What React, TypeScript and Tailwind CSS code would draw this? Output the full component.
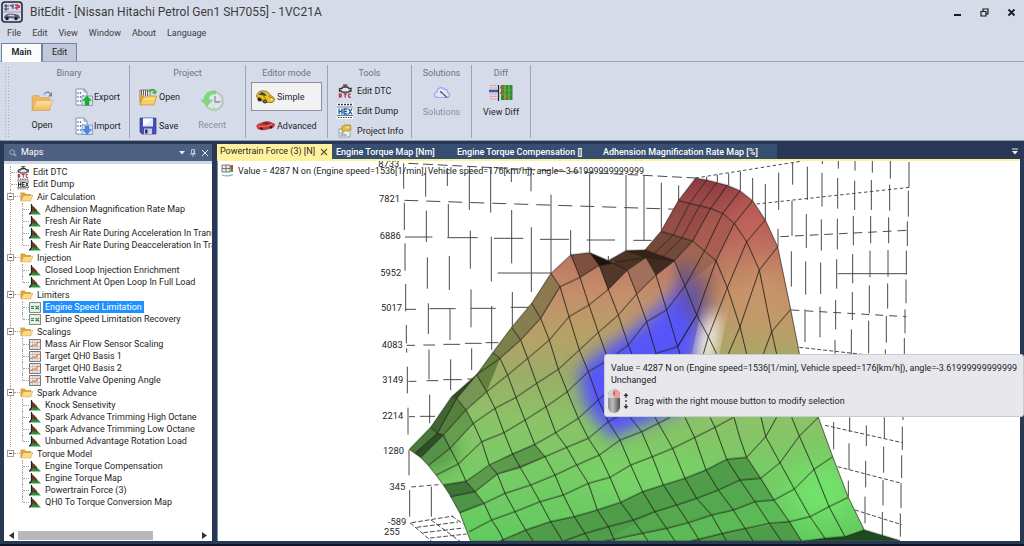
import React from "react";

type IconProps = { className?: string };

/* ---------- icons ---------- */

const AppIcon = () => (
  <svg viewBox="0 0 22 22" className="size-[22px] shrink-0">
    <rect x="1" y="1" width="20" height="20" rx="3" fill="#d9d8ea" stroke="#222838" strokeWidth="1.6" />
    <path d="M3 5h5M3 8h5M5 3v7M9 4l3 2M12 3v5" stroke="#3d4566" strokeWidth="1.2" fill="none" />
    <path d="M14 4l5 1M14 7l5-1M16 3v6" stroke="#c03a55" strokeWidth="1.3" fill="none" />
    <path d="M2 11h18" stroke="#9aa0c0" strokeWidth="1" />
    <path d="M3 17c0-3 3-4 6-4.500l5 .5c3 .5 5 1.500 5 4.500z" fill="#59607c" />
    <path d="M6 15l3-1.500 4 .5 1 1.500z" fill="#c8d0e6" />
    <circle cx="6" cy="17.500" r="1.800" fill="#1e2230" />
    <circle cx="15" cy="17.500" r="1.800" fill="#1e2230" />
  </svg>
);

const FolderIcon = () => (
  <svg viewBox="0 0 24 24" className="size-6">
    <defs>
      <linearGradient id="folderFront" x1="0" y1="0" x2="0" y2="1">
        <stop offset="0" stopColor="#fde3a4" />
        <stop offset="1" stopColor="#efb95c" />
      </linearGradient>
    </defs>
    <path d="M2 21V7.500l1-1h5.500l2 2H19l1 1V21z" fill="#e9b765" stroke="#cf9a4c" strokeWidth=".5" />
    <path d="M2 21.500l4.500-10h16.500l-4 10z" fill="url(#folderFront)" stroke="#d29b48" strokeWidth=".5" />
    <path d="M14 5.500c2-3 5-3 6.500-.5" fill="none" stroke="#6d83ad" strokeWidth="1.200" />
    <path d="M22 3v4.500h-4z" fill="#6d83ad" />
  </svg>
);

const SmallFolder = () => (
  <svg viewBox="0 0 13 11" className="h-[11px] w-[13px] shrink-0">
    <path d="M.5 10V1.500h4L6 3h5v7z" fill="#d9a441" />
    <path d="M1 10L3.500 4.500h9.500L10.500 10z" fill="#fbd98a" stroke="#b98a35" strokeWidth=".4" />
  </svg>
);

const TransferIcon = ({ up }: { up: boolean }) => (
  <svg viewBox="0 0 18 18" className="size-[18px] shrink-0">
    <path d="M1 1h8l3 3v13H1z" fill="#f8fafd" stroke="#6f8fb5" strokeWidth=".9" />
    <path d="M9 1v3h3" fill="none" stroke="#6f8fb5" strokeWidth=".9" />
    <path d="M3 4v2M5.500 4v2M3 8v2M5.500 8v2M8 7v2M3 12v2M5.500 12v2" stroke="#70809a" strokeWidth="1.200" />
    <path d="M7 8h10.500v9.500H7z" fill="#d5e2f2" stroke="#6f8fb5" strokeWidth=".8" />
    {up ? (
      <path d="M12 8l4.500 4.500h-2.500V17h-4v-4.500H7.500z" fill="#12b81e" stroke="#0d8d18" strokeWidth=".4" />
    ) : (
      <path d="M12 17.500l4.500-5h-2.500V9h-4v3.500H7.500z" fill="#4d87ea" stroke="#2c5fbe" strokeWidth=".4" />
    )}
  </svg>
);

const ProjectOpenIcon = () => (
  <svg viewBox="0 0 18 18" className="size-[18px] shrink-0">
    <path d="M1 2h10v13H1z" fill="#f2f0ee" stroke="#6a5a52" strokeWidth=".7" />
    <path d="M2.500 2v6M4.500 2v6M6.500 2v6M8.500 2v6" stroke="#5a4a44" strokeWidth=".9" />
    <path d="M10 4c1.500-3 5-3 6-.5" fill="none" stroke="#3fae3e" strokeWidth="2" />
    <path d="M18 2.500l-1.500 4-4-2z" fill="#3fae3e" />
    <path d="M1 17V7h4l1 2v8z" fill="#dba63a" />
    <path d="M1 17l3-8h4l1-1h8.500l-2.500 9z" fill="#f8cf62" stroke="#b6842a" strokeWidth=".6" />
    <path d="M5 11h10.500" stroke="#fff0b8" strokeWidth="1" />
  </svg>
);

const SaveIcon = () => (
  <svg viewBox="0 0 18 18" className="size-[18px] shrink-0">
    <path d="M1 1h16v16H3l-2-2z" fill="#4450b4" stroke="#303a8c" strokeWidth=".7" />
    <rect x="4" y="1.500" width="10" height="8" fill="#dfe6f8" />
    <path d="M4 1.500h10L4 9.500z" fill="#f8faff" />
    <rect x="5" y="11.500" width="8" height="5.500" fill="#c9cdea" />
    <rect x="6" y="12.500" width="2.500" height="4" fill="#262f7c" />
  </svg>
);

const RecentIcon = () => (
  <svg viewBox="0 0 24 22" className="h-[22px] w-6">
    <circle cx="14" cy="11" r="9" fill="#dfe5e8" stroke="#b3bdbf" strokeWidth="1.500" />
    <path d="M15 6v6h5" fill="none" stroke="#84939b" strokeWidth="1.300" />
    <path d="M14 3.500v1M14 17.500v1M21.500 11h-1" stroke="#7c8a92" />
    <path d="M16 1C9 0 4 4 4 10H1l6 6 5.500-6H8.500C8.500 6 11 3.500 16 3.500z" fill="#7ddb79" stroke="#6cc56b" strokeWidth=".5" />
    <path d="M8 17c2 3 6 4 9 3" fill="none" stroke="#a5dba3" strokeWidth="1.500" />
  </svg>
);

const YellowCar = () => (
  <svg viewBox="0 0 19 14" className="h-[14px] w-[19px] shrink-0">
    <path d="M.5 6.500C1 3 3 .8 6.500.8c4 0 6 1.200 7.500 4l4 3c1 2 0 4-2 4.700L9 12.500 3 10z" fill="#eebf22" stroke="#4b3f10" strokeWidth=".6" />
    <path d="M2.500 4.500l3-2.500 3.500 1.500 1.500 2.500-3.500-.5z" fill="#39465a" />
    <path d="M1.500 7.500l5.500 2.500M7.500 6l2.500 3.500M12.500 6l4 2.500" stroke="#7b641a" strokeWidth=".8" />
    <circle cx="3.500" cy="9.500" r="2" fill="#2a2a2a" />
    <circle cx="9" cy="11.500" r="2" fill="#2a2a2a" />
    <circle cx="9" cy="11.500" r=".8" fill="#bbb" />
    <circle cx="15.500" cy="9.500" r="1" fill="#fdf3b4" />
  </svg>
);

const RedCar = () => (
  <svg viewBox="0 0 19 10" className="h-[10px] w-[19px] shrink-0">
    <path d="M.5 5c1-2 3-2.500 5-3C8 .5 13 0 15 1.500l3.500 1.500c.5 2-1 4-4 4.500L8 9 2 8z" fill="#cf3338" stroke="#8a1c20" strokeWidth=".4" />
    <path d="M6 2.500l4-1.200 4 .7-3 1.500z" fill="#5a2a32" />
    <path d="M2 5l6 .7 8-2" stroke="#f08a8a" strokeWidth=".8" fill="none" />
    <circle cx="5.500" cy="7.800" r="1.300" fill="#2c1c1c" />
    <circle cx="15" cy="6.300" r="1.300" fill="#2c1c1c" />
  </svg>
);

const DtcIcon = ({ className = "size-[14px]" }: IconProps) => (
  <svg viewBox="0 0 14 14" className={`${className} shrink-0`}>
    <path d="M2.500 4.500H4L5 3h4.500L11 4.500h2V7h-1.500l-1 1.200H4L3 7H1.500V5z" fill="#e4e6ee" stroke="#2c2c2c" strokeWidth="1.300" />
    <path d="M5 1h4.500M7.200 1v1.500" stroke="#2c2c2c" strokeWidth="1.200" />
    <path d="M1.500 9.800v3.400c2.500 0 2.500-3.400 0-3.400zM5.500 9.800h3.500M7.200 9.800v3.700M12.800 10c-3-1-3 4 0 3.300" fill="none" stroke="#a8333e" strokeWidth="1.300" />
  </svg>
);

const HexIcon = ({ color, className = "size-[16px]" }: IconProps & { color: string }) => (
  <svg viewBox="0 0 16 16" className={`${className} shrink-0`}>
    <rect width="16" height="16" fill="#fff" />
    <path d="M1 1.500h14" stroke="#333" strokeWidth="1.300" strokeDasharray="2 1" />
    <path d="M0 4h16M0 12.500h16" stroke={color} strokeWidth=".8" />
    <path d="M2 5.500v6M5 5.500v6M2 8.500h3M7 6h3.500M7 8.500h3M7 11h3.500M7 5.500v6M11.500 5.500l3.500 6M15 5.500l-3.500 6" stroke={color} strokeWidth="1.300" fill="none" />
    <path d="M1 14.500h14" stroke="#444" strokeWidth="1.200" strokeDasharray="1.500 1" />
  </svg>
);

const ProjectInfoIcon = () => (
  <svg viewBox="0 0 14 14" className="size-[14px] shrink-0">
    <path d="M1 5h11v8H1z" fill="#eef0f3" stroke="#8a9097" strokeWidth=".8" />
    <path d="M2.500 9h3M2.500 11h6" stroke="#5a7ba8" />
    <path d="M4 7V2.500L7 1l5.500 0 .5 4.500-3.500 2-2-1.500-1.500 2z" fill="#e6c23c" stroke="#8d6f22" strokeWidth=".6" />
    <path d="M8 4l3-1" stroke="#fff2b0" />
  </svg>
);

const CloudIcon = () => (
  <svg viewBox="0 0 18 14" className="h-[14px] w-[18px]">
    <path d="M4.500 11.500C.5 11 .5 6.500 4 6c0-4 5-6 7.500-2.500 2-.5 3.500 1 3 2.800 3 .7 2.500 5-.5 5.200z" fill="#e3e6fb" stroke="#a0a3f0" strokeWidth="1.200" />
    <path d="M8 6l6 5.500" stroke="#5d5d65" strokeWidth="1.300" />
    <path d="M7 5l2 .5-1.500 1.500z" fill="#4d4d55" />
  </svg>
);

const DiffIcon = () => (
  <svg viewBox="0 0 24 18" className="h-[18px] w-6">
    <path d="M1 1.500h7M1 4h7M1 10h7M1 12.500h7M1 15h7" stroke="#e79aa2" strokeWidth="1.200" strokeDasharray="3 .6" />
    <path d="M0 7h9" stroke="#3460a0" strokeWidth="2.500" />
    <path d="M9.500 1v16" stroke="#222" strokeWidth="1.200" />
    <rect x="12" y="1" width="11.500" height="15" fill="#2f8a35" />
    <path d="M11 3.500h4M11 9h4M15 13h4" stroke="#c8552f" strokeWidth="2" />
    <path d="M16 1v15M20 1v15" stroke="#8acb52" strokeWidth=".9" />
    <path d="M12 6h11M12 11h11" stroke="#74ae44" strokeWidth=".7" />
  </svg>
);

const SurfaceIcon = () => (
  <svg viewBox="0 0 12 11" className="h-[11px] w-3 shrink-0">
    <path d="M0 10.500L2.500 7V1l9.500 9.500z" fill="#2f8f3c" />
    <path d="M2.800 1v7l1.500-1 1 1.500L6.500 7l1.500 1V6z" fill="#7a3a28" />
    <path d="M2.500 0v7.500L.3 10.300" stroke="#1c241c" strokeWidth="1.200" fill="none" />
    <path d="M5 3.200v4M7.500 5.800v3" stroke="#2c3c28" strokeWidth=".6" fill="none" />
  </svg>
);

const ScalarIcon = () => (
  <svg viewBox="0 0 12 11" className="h-[11px] w-3 shrink-0">
    <rect x=".6" y=".6" width="10.800" height="9.800" fill="#eef3ee" stroke="#6c7a70" strokeWidth=".9" />
    <path d="M2 4.700h3M2 6.500h3M6.500 3.800l3.500 3.600M10 3.800L6.500 7.400" stroke="#28894a" strokeWidth="1.200" />
  </svg>
);

const CurveIcon = () => (
  <svg viewBox="0 0 12 11" className="h-[11px] w-3 shrink-0">
    <rect x=".6" y=".6" width="10.800" height="9.800" fill="#f6ede6" stroke="#60646c" strokeWidth=".9" />
    <path d="M3.500 1v9M6 1v9M8.500 1v9M1 3.500h10M1 7.500h10" stroke="#a3a3a3" strokeWidth=".5" />
    <path d="M1.500 8l2.500-2 3 .5L8 4l3-1" fill="none" stroke="#d98958" strokeWidth="1.200" />
  </svg>
);

const MouseIcon = () => (
  <svg viewBox="0 0 22 26" className="h-[26px] w-[22px] shrink-0">
    <defs>
      <linearGradient id="mouseBody" x1="0" x2="1">
        <stop offset="0" stopColor="#8b8b8b" />
        <stop offset=".4" stopColor="#bdbdbd" />
        <stop offset="1" stopColor="#4c4c4c" />
      </linearGradient>
    </defs>
    <rect x="1" y="1" width="12" height="24" rx="6" fill="url(#mouseBody)" />
    <path d="M7 1a6 6 0 0 0-6 6v3h6z" fill="#d3d3d3" />
    <path d="M7 1a6 6 0 0 1 6 6v3H7z" fill="#f59a9a" />
    <rect x="6" y="3" width="2" height="4.500" rx="1" fill="#b86a6a" />
    <path d="M19 5l2.500 3h-5zM19 21l2.500-3h-5z" fill="#333" />
    <path d="M19 7v3M19 12v2M19 16v3" stroke="#333" strokeWidth="1.300" />
  </svg>
);

/* ---------- ribbon ---------- */

const Group = ({ title, className = "", children }: { title: string; className?: string; children: React.ReactNode }) => (
  <section className={`flex flex-col border-r border-[#9aa5bd] ${className}`}>
    <h2 className="pt-[2px] text-center text-[9px] leading-3 text-[#6d7482]">{title}</h2>
    {children}
  </section>
);

const RowButton = ({ icon, label, className = "gap-1" }: { icon: React.ReactNode; label: string; className?: string }) => (
  <button className={`flex items-center text-[9px] leading-3 whitespace-nowrap ${className}`}>
    {icon}
    {label}
  </button>
);

const LargeButton = ({ icon, label, className = "" }: { icon: React.ReactNode; label: string; className?: string }) => (
  <button className={`flex flex-col items-center text-[9px] leading-3 ${className}`}>
    <span className="flex h-7 items-center">{icon}</span>
    <span className="pt-1">{label}</span>
  </button>
);

const Ribbon = () => (
  <div className="flex h-[79px] border-b border-[#8c98b2] pt-[3px] pb-[2px] pl-[4px]">
    <div className="my-px w-[5px] bg-[radial-gradient(#a3adc2_1px,transparent_1px)] bg-[length:3px_3px]" />
    <Group title="Binary" className="w-[121px]">
      <div className="flex items-start pt-2">
        <LargeButton icon={<FolderIcon />} label="Open" className="w-[66px]" />
        <div className="flex flex-col gap-[11px] pt-px">
          <RowButton icon={<TransferIcon up />} label="Export" className="gap-[1px]" />
          <RowButton icon={<TransferIcon up={false} />} label="Import" className="gap-[1px]" />
        </div>
      </div>
    </Group>
    <Group title="Project" className="w-[116px]">
      <div className="flex items-start gap-2 pt-2 pl-[9px]">
        <div className="flex flex-col gap-[11px] pt-px">
          <RowButton icon={<ProjectOpenIcon />} label="Open" className="gap-[2px]" />
          <RowButton icon={<SaveIcon />} label="Save" className="gap-[2px]" />
        </div>
        <LargeButton icon={<RecentIcon />} label="Recent" className="w-12 text-[#8b919d]" />
      </div>
    </Group>
    <Group title="Editor mode" className="w-[82px]">
      <div className="flex flex-col gap-[5px] px-[5px] pt-[3px]">
        <RowButton icon={<YellowCar />} label="Simple" className="h-[29px] gap-[2px] border border-[#8b919c] bg-[#f2f2f2] pl-1" />
        <RowButton icon={<RedCar />} label="Advanced" className="h-5 gap-[2px] pl-[5px]" />
      </div>
    </Group>
    <Group title="Tools" className="w-[84px]">
      <div className="flex flex-col gap-[5px] pt-[5px] pl-[9px]">
        <RowButton icon={<span className="flex w-4 justify-center"><DtcIcon /></span>} label="Edit DTC" />
        <RowButton icon={<HexIcon color="#255c94" />} label="Edit Dump" />
        <RowButton icon={<span className="flex w-4 justify-center"><ProjectInfoIcon /></span>} label="Project Info" />
      </div>
    </Group>
    <Group title="Solutions" className="w-[60px]">
      <button className="flex flex-col items-center gap-[6px] pt-[7px] text-[9px] leading-3 text-[#8b919d]">
        <CloudIcon />
        Solutions
      </button>
    </Group>
    <Group title="Diff" className="w-[59px]">
      <button className="flex flex-col items-center gap-[4px] pt-[5px] text-[9px] leading-3">
        <DiffIcon />
        View Diff
      </button>
    </Group>
  </div>
);

/* ---------- maps tree ---------- */

type Kind = "surface" | "scalar" | "curve";
const tree: { name: string; kind: Kind; items: string[] }[] = [
  {
    name: "Air Calculation",
    kind: "surface",
    items: [
      "Adhension Magnification Rate Map",
      "Fresh Air Rate",
      "Fresh Air Rate During Acceleration In Transient",
      "Fresh Air Rate During Deacceleration In Transient",
    ],
  },
  { name: "Injection", kind: "surface", items: ["Closed Loop Injection Enrichment", "Enrichment At Open Loop In Full Load"] },
  { name: "Limiters", kind: "scalar", items: ["Engine Speed Limitation", "Engine Speed Limitation Recovery"] },
  {
    name: "Scalings",
    kind: "curve",
    items: ["Mass Air Flow Sensor Scaling", "Target QH0 Basis 1", "Target QH0 Basis 2", "Throttle Valve Opening Angle"],
  },
  {
    name: "Spark Advance",
    kind: "surface",
    items: ["Knock Sensetivity", "Spark Advance Trimming High Octane", "Spark Advance Trimming Low Octane", "Unburned Advantage Rotation Load"],
  },
  {
    name: "Torque Model",
    kind: "surface",
    items: ["Engine Torque Compensation", "Engine Torque Map", "Powertrain Force (3)", "QH0 To Torque Conversion Map"],
  },
];
const SELECTED = "Engine Speed Limitation";
const kindIcon: Record<Kind, React.ReactNode> = { surface: <SurfaceIcon />, scalar: <ScalarIcon />, curve: <CurveIcon /> };

const Branch = () => <span className="w-[6px] shrink-0 border-t border-dotted border-[#a0a0a0]" />;

const MapsPanel = () => (
  <aside className="flex w-[208px] shrink-0 flex-col bg-white">
    <header className="flex h-[17px] items-center bg-[#4d6082] pr-[3px] pl-[5px] text-[9px] text-white">
      <svg viewBox="0 0 10 10" className="size-[8px]">
        <circle cx="4" cy="4" r="3" fill="none" stroke="#b5c0d6" />
        <path d="M6 6l3 3" stroke="#b5c0d6" strokeWidth="1.300" />
      </svg>
      <h2 className="flex-1 pl-[4px]">Maps</h2>
      <div className="flex items-center gap-[5px]">
        <button aria-label="Panel menu">
          <svg viewBox="0 0 6 4" className="block h-1 w-[6px]"><path d="M0 0h6L3 3.500z" fill="#e3e8f1" /></svg>
        </button>
        <button aria-label="Pin">
          <svg viewBox="0 0 6 8" className="block h-2 w-[6px]"><path d="M1.500 .5h3v4h-3zM0 5h6M3 5v3M4 1v4" fill="none" stroke="#d3dae8" strokeWidth=".8" /></svg>
        </button>
        <button aria-label="Close panel">
          <svg viewBox="0 0 8 8" className="block size-2"><path d="M1 1l6 6M7 1L1 7" stroke="#e3e8f1" strokeWidth="1" /></svg>
        </button>
      </div>
    </header>
    <div className="h-[3px] bg-[#cfd6e5]" />
    <div className="flex-1 overflow-hidden pt-[2px] text-[9px] leading-3 whitespace-nowrap text-[#1e1e1e]">
      <div className="ml-[6px] border-l border-dotted border-[#a0a0a0]">
        <div className="flex h-3 items-center"><Branch /><DtcIcon className="size-3" /><span className="pl-1">Edit DTC</span></div>
        <div className="flex h-3 items-center"><Branch /><HexIcon color="#222" className="size-3" /><span className="pl-1">Edit Dump</span></div>
      </div>
      <ul>
        {tree.map((group, index) => (
          <li key={group.name} className="relative">
            {index < tree.length - 1 && <span className="absolute inset-y-0 left-[6px] border-l border-dotted border-[#a0a0a0]" />}
            <div className="flex h-[13px] items-center pl-[3px]">
              <button aria-label={`Collapse ${group.name}`} className="relative flex size-[7px] items-center justify-center border border-[#9c9c9c] bg-white">
                <span className="h-px w-[3px] bg-[#444]" />
              </button>
              <Branch />
              <SmallFolder />
              <span className="pl-[4px]">{group.name}</span>
            </div>
            <ul className="ml-[18px]">
              {group.items.map((item, row) => (
                <li key={item} className="flex h-3">
                  <span className={`w-0 border-l border-dotted border-[#a0a0a0] ${row === group.items.length - 1 ? "h-[6px]" : "h-3"}`} />
                  <span className="flex items-center">
                    <Branch />
                    {kindIcon[group.kind]}
                    <span className={`ml-[2px] px-[2px] ${item === SELECTED ? "bg-[#1e90ff] text-white" : ""}`}>{item}</span>
                  </span>
                </li>
              ))}
            </ul>
          </li>
        ))}
      </ul>
    </div>
    <div className="flex h-[11px] items-center justify-between px-[5px]">
      <svg viewBox="0 0 5 7" className="h-[7px] w-[5px]"><path d="M5 0v7L0 3.500z" fill="#333" /></svg>
      <div className="mx-1 flex-1"><div className="h-[9px] w-3/4 bg-[#b8b8b8]" /></div>
      <svg viewBox="0 0 5 7" className="h-[7px] w-[5px]"><path d="M0 0v7l5-3.500z" fill="#333" /></svg>
    </div>
  </aside>
);

/* ---------- surface chart ---------- */

const axis: [string, number, number][] = [
  ["8733", 553, 80],
  ["7821", 555, 186],
  ["6886", 557, 296],
  ["5952", 559, 407],
  ["5017", 561, 514],
  ["4083", 563, 624],
  ["3149", 565, 730],
  ["2214", 565, 838],
  ["1280", 567, 942],
  ["345", 571, 1049],
  ["-589", 574, 1154],
  ["255", 554, 1184],
];

const OUTLINE =
  "583,928 647,862 710,770 785,704 833,638 890,562 950,490 1008,400 1067,345 1124,338 1180,362 1233,332 1290,330 1338,274 1390,182 1442,114 1475,120 1537,136 1575,152 1613,182 1651,240 1688,320 1727,508 1753,640 1810,832 1853,950 1900,1072 1948,1170 2055,1202 767,1204 735,1120 705,1065 685,1035 663,1005 640,976 617,952";

const SurfaceChart = () => (
  <svg viewBox="9 63 2406 1140" className="block w-full" role="img" aria-label="Powertrain force surface">
    <defs>
      <linearGradient id="height" gradientUnits="userSpaceOnUse" x1="1200" y1="114" x2="1200" y2="1204">
        <stop offset="0" stopColor="#8c3a40" />
        <stop offset=".1" stopColor="#a75350" />
        <stop offset=".2" stopColor="#bb7360" />
        <stop offset=".32" stopColor="#c48f6a" />
        <stop offset=".44" stopColor="#b5a268" />
        <stop offset=".54" stopColor="#9bad66" />
        <stop offset=".66" stopColor="#8cc268" />
        <stop offset=".8" stopColor="#79cb66" />
        <stop offset="1" stopColor="#60cb5e" />
      </linearGradient>
      <clipPath id="surface"><polygon points={OUTLINE} /></clipPath>
      <filter id="soft" x="-30%" y="-30%" width="160%" height="160%"><feGaussianBlur stdDeviation="24" /></filter>
      <filter id="softer" x="-80%" y="-80%" width="260%" height="260%"><feGaussianBlur stdDeviation="45" /></filter>
    </defs>

    {/* back walls */}
    <g fill="none" stroke="#4a4a4a" strokeWidth="3">
      <path d="M566 70V146M568 188V270M570 310V392M572 432V514M574 555V610M575 625V638M577 680V760M579 803V884M582 930V1006M584 1050V1130" />
      <path d="M632 82V170M634 212V306M637 352V446M640 490V582M642 628V718M644 764V850M649 1040V1130" />
      <path d="M697 84V138M700 192V292M703 348V450M705 505V600M707 658V750" />
      <path d="M763 80V210M766 272V386M768 448V562M770 625V690M827 88V218M829 290V424M830 498V630M889 84V126M890 210V370M892 456V560M948 84V154M949 262V456M1008 164V400M1067 270V345M1124 100V338M1180 348V362" />
      <path d="M1233 105V332M1287 108V300M1339 128V270M1391 136V180M1443 112V124M1475 110V120M1507 104V128M1541 100V136M1576 94V152M1613 114V182M1651 132V240M1689 266V320" />
      <path d="M1691 98V210M1733 68V134M1731 182V288M1729 334V440M1777 80V180M1774 222V324M1772 364V464M1770 508V606M1822 63V72M1821 98V200M1819 238V332M1817 368V462M1815 500V592M1870 63V86M1868 114V206M1867 236V328M1865 358V446M1862 480V568M1860 600V660M1920 63V92M1919 122V210M1915 228V316M1913 342V430M1912 456V540M1909 568V660" />
      <path d="M1972 63V98M1969 120V210M1967 228V310M1965 332V412M1963 436V520M1961 542V640M2026 63V116M2024 134V212M2021 232V310M2019 330V410M2018 430V506M2014 528V608M2011 628V660M2082 66V142M2080 152V230M2077 244V318M2074 332V404M2073 418V490M2070 508V580M2068 594V660" />
      <path d="M1856 846V928M1904 832V876M1902 910V990M1900 1022V1070M1954 856V918M1952 962V1042M1950 1070V1150M2008 832V896M2006 920V998M2004 1020V1096M2002 1116V1188M2064 830V840M2062 860V930M2060 946V1014M2058 1030V1104M2056 1120V1190" />
      <path d="M580 70L1442 114" strokeDasharray="30 14" />
      <path d="M568 181L1390 208" strokeDasharray="42 24" />
      <path d="M570 291H652M697 293H788M837 295H925M975 298H1062M1115 300H1200M1255 301H1310" />
      <path d="M848 399H1008M572 508H603M643 506H722M767 505H842M887 502H942M575 616H600M625 615H660M685 613H735M750 610H800M812 608H850M580 724H604M635 722H670M685 719H740M757 717H785M582 830H600M615 829H660" />
      <path d="M589 1041L670 1034" strokeDasharray="14 9" />
      <path d="M1442 114L1763 63M1625 192L2084 142" strokeDasharray="10 8" />
      <path d="M1696 290L2077 271" strokeDasharray="26 18" />
      <path d="M1868 401H2074" />
      <path d="M1729 510L2074 530" strokeDasharray="24 18" />
      <path d="M1753 622L1950 644M1830 856L2062 908M1868 980L2060 1030M1920 1110L2060 1154" strokeDasharray="12 6" />
      <path d="M585 1148L650 1204M648 1140L735 1204M710 1128L745 1152M590 1148L715 1128M605 1162L730 1146M625 1178L745 1164M645 1194L755 1182" strokeDasharray="14 6" />
    </g>

    {/* shaded surface */}
    <polygon points={OUTLINE} fill="url(#height)" />
    <g clipPath="url(#surface)">
      <ellipse cx="1615" cy="240" rx="55" ry="100" fill="#d96f63" opacity=".6" filter="url(#softer)" />
      <ellipse cx="1640" cy="470" rx="70" ry="110" fill="#c99a6c" opacity=".7" filter="url(#softer)" />
      <ellipse cx="1820" cy="1060" rx="110" ry="90" fill="#72ee6e" opacity=".7" filter="url(#softer)" />
      <ellipse cx="1290" cy="1010" rx="200" ry="60" fill="#7ddb6b" opacity=".6" filter="url(#softer)" />
      <ellipse cx="640" cy="930" rx="90" ry="70" fill="#4d8e42" opacity=".7" filter="url(#soft)" />
      <polygon points="1338,274 1433,303 1378,362 1290,330" fill="#74493a" />
      <polygon points="1433,303 1503,362 1410,438 1378,362" fill="#9a6148" opacity=".7" />
      <polygon points="1338,274 1390,182 1487,205 1433,303" fill="#8b4740" opacity=".7" />
      <polygon points="1433,303 1487,205 1558,250 1503,362" fill="#a4594c" opacity=".7" />
      <polygon points="1410,438 1503,362 1480,590 1445,525" fill="#8b5c58" opacity=".7" filter="url(#soft)" />
      <g filter="url(#soft)" fill="#5754f8">
        <polygon points="1398,425 1425,450 1462,535 1452,610 1430,700 1400,810 1250,865 1190,895 1110,800 1090,690 1150,640 1265,560 1345,490" />
        <polygon points="1390,350 1440,390 1480,500 1450,580 1385,480" fill="#5c4f9c" opacity=".75" />
      </g>
      <ellipse cx="1480" cy="600" rx="24" ry="90" fill="#fff" filter="url(#soft)" transform="rotate(12 1480 600)" />
      {/* steep facets */}
      <g>
        <polygon points="1067,345 1124,338 1153,377 1095,412" fill="#80503f" />
        <polygon points="1124,338 1153,377 1237,390 1180,362" fill="#1e130e" />
        <polygon points="1153,377 1215,365 1237,390 1180,448" fill="#523829" />
        <polygon points="1180,362 1233,332 1293,352 1237,390 1205,368" fill="#4e3425" />
        <polygon points="1233,332 1290,330 1378,362 1293,352" fill="#35231a" />
        <polygon points="1293,352 1378,362 1323,405" fill="#412a20" />
        <polygon points="1237,390 1293,352 1323,405 1265,462" fill="#a1705a" />
        <polygon points="1008,400 1035,440 977,535 950,490" fill="#8d7850" />
        <polygon points="950,490 977,535 917,600 890,562" fill="#857e4f" />
        <polygon points="890,562 917,600 855,655 833,638" fill="#7a8049" />
        <polygon points="833,638 855,655 815,755 785,704" fill="#66803f" />
        <polygon points="785,704 770,738 729,776 712,768" fill="#2f4a25" />
        <polygon points="710,770 725,775 667,880 647,862" fill="#426332" />
        <polygon points="725,775 753,810 685,885 667,880" fill="#55803e" />
        <polygon points="785,704 815,755 753,810 725,775" fill="#769653" />
        <polygon points="753,810 775,850 705,925 685,885" fill="#659c4e" />
        <polygon points="583,928 647,862 667,880 600,940" fill="#4b7b3c" />
        <polygon points="600,940 667,880 685,885 617,952" fill="#2e4f27" />
        <polygon points="617,952 685,885 705,925 640,976" fill="#559148" />
        <polygon points="685,1035 753,1024 780,1055 705,1072" fill="#3f7338" />
        <polygon points="705,1072 780,1055 807,1090 735,1120" fill="#4d9447" />
        <polygon points="753,1024 823,978 890,942 960,913 990,950 917,985 847,1002 780,1055" fill="#5c9a4c" />
        <polygon points="853,1204 932,1170 1007,1145 1078,1130 1147,1110 1217,1087 1283,1055 1345,1035 1410,1015 1473,990 1535,958 1595,952 1637,1015 1677,1080 1723,1145 1760,1204" fill="#4f9c49" />
        <polygon points="853,1204 1165,1204 1320,1115 1385,1095 1445,1075 1510,1050 1575,1020 1637,1015 1677,1080 1620,1085 1555,1110 1490,1125 1420,1148 1165,1202" fill="#54a84e" />
        <polygon points="1425,1202 1545,1175 1723,1145 1677,1080 1620,1085 1555,1110 1490,1125 1355,1165 1165,1202" fill="#5cba56" />
        <polygon points="1765,1204 1830,1195 1890,1190 1948,1170 2055,1202" fill="#1f4a20" />
      </g>
    </g>

    {/* mesh */}
    <g fill="none" stroke="#1c1c14" strokeWidth="2.500" strokeLinejoin="round">
      <polygon points={OUTLINE} strokeWidth="2" />
      <g transform="translate(435 600)">
        <path d="M212 262L232 280L250 285L270 325L295 372L318 424L345 455L372 490L395 540L418 575L432 604" />
        <path d="M275 170L290 175L318 210L340 250L365 305L388 375L412 402L435 460L465 515L497 570L520 604" />
        <path d="M350 104L380 155L405 205L432 278L458 342L482 385L512 435L540 485L572 545L600 590L608 604" />
        <path d="M398 38L420 55L443 105L468 172L495 240L525 315L555 350L585 405L610 465L643 530L675 580L690 604" />
        <path d="M455 -38L482 0L503 55L530 130L558 200L587 278L620 322L650 375L685 430L712 510L745 560L765 604" />
        <path d="M515 -110L542 -65L568 0L595 88L622 155L655 235L685 295L718 345L750 412L782 487L820 540L865 604" />
        <path d="M573 -200L600 -160L627 -70L658 30L685 95L715 180L745 245L780 300L812 375L848 455L885 515L920 565L945 604" />
        <path d="M165 340L232 280L290 175L350 104L420 55L482 0L542 -65L600 -160L660 -188L718 -225" />
        <path d="M182 352L250 285L318 210L380 155L443 105L503 55L568 0L627 -70L687 -105L745 -152L802 -210L858 -248" />
        <path d="M205 376L270 325L340 250L405 205L468 172L530 130L595 88L658 30L715 -23L775 -75L830 -138L888 -195L943 -238" />
        <path d="M228 405L295 372L365 305L432 278L495 240L558 200L622 155L685 95L745 60L805 15L860 -55L920 -90L975 -162" />
        <path d="M250 435L318 424L388 375L458 342L525 313L587 278L655 235L715 180L770 130L830 90L888 40L953 20L1010 -75" />
        <path d="M270 470L345 455L412 402L482 380L555 350L620 322L685 295L745 245L800 215" />
        <path d="M300 517L372 490L435 460L512 435L585 405L650 375L718 345L780 300L845 275L930 232" />
        <path d="M328 575L395 540L465 515L540 485L610 465L685 430L750 412L812 375L877 350L938 325L1005 292L1065 262L1120 232" />
        <path d="M418 604L497 570L572 545L643 530L712 510L782 487L848 455L910 435L975 415L1038 390L1100 358L1160 352L1217 290L1250 232" />
        <path d="M608 604L675 580L745 560L820 540L885 515L950 495L1010 475L1075 450L1140 420L1202 415L1260 368L1318 288L1375 232" />
      </g>
      <g transform="translate(975 90)">
        <path d="M92 252L120 322L147 405L175 487L205 570M150 248L178 287L205 358L235 435L265 525L295 600M205 272L262 300L290 372L320 455L348 550M258 242L318 262L348 315L380 420L413 530L435 600" />
        <path d="M315 240L403 272L435 348L470 435L505 500L530 552M363 184L458 213L528 272L562 353L600 470L620 552M415 92L512 115L548 130L583 160L620 215L658 300L695 485L710 552" />
        <path d="M500 30L450 98L400 195L345 248M530 38L480 105L425 205L370 258" strokeWidth="2" />
        <path d="M562 46L512 115L458 213L403 272M600 62L548 130L495 240L435 348M638 92L583 160L528 272L470 435L413 530M676 150L620 215L562 353L505 500L490 552M713 230L658 300L600 470L565 552M752 418L695 485L670 552M178 287L240 275L318 262L403 272" />
      </g>
      <g transform="translate(1155 570)">
        <path d="M90 262L125 305L157 380L190 465L230 525L265 578L300 634M165 262L218 355L255 445L290 505L335 555L380 634M255 262L285 325L318 420L355 480L400 540L460 634M330 262L345 292L380 388L420 450L465 515L508 580L545 634" />
        <path d="M402 262L420 325L440 382L482 445L522 510L568 575L605 634M483 262L497 320L540 398L583 477L630 560L675 625M575 262L598 318L642 418L687 530L735 620" />
        <path d="M10 634L200 595L265 578L335 555L400 540L465 515L522 510L583 477L642 418L698 380M270 634L390 605L508 580L568 575L630 560L687 530L745 502M610 634L675 625L735 620L793 600" />
      </g>
    </g>

    <g fontFamily="Roboto, 'Open Sans', sans-serif" fontSize="28" fill="#262626" textAnchor="end">
      {axis.map(([label, x, y]) => (
        <text key={label} x={x} y={y}>{label}</text>
      ))}
    </g>
  </svg>
);

const VALUE = "Value = 4287 N on (Engine speed=1536[1/min], Vehicle speed=176[km/h]), angle=-3.61999999999999";

const Workspace = () => (
  <main className="flex min-w-0 flex-1 flex-col">
    <div className="flex h-[15px] items-stretch text-[9px] leading-[17px] font-medium whitespace-nowrap text-white">
      <div className="flex w-[115px] items-center justify-between bg-[#fff29d] pr-1 pl-[3px] font-normal text-[#2b2b2b]">
        <button>Powertrain Force (3) [N]</button>
        <button aria-label="Close tab">
          <svg viewBox="0 0 8 8" className="block size-2"><path d="M1 1l6 6M7 1L1 7" stroke="#5d5836" strokeWidth="1.100" /></svg>
        </button>
      </div>
      <button className="w-[122px] bg-[#364e6f] pl-[4px] text-left">Engine Torque Map [Nm]</button>
      <button className="w-[146px] bg-[#364e6f] pl-[3px] text-left">Engine Torque Compensation []</button>
      <button className="w-[177px] bg-[#364e6f] pl-[3px] text-left">Adhension Magnification Rate Map [%]</button>
      <button aria-label="Open documents" className="ml-auto px-[2px]">
        <svg viewBox="0 0 6 7" className="h-[7px] w-[6px]"><path d="M0 .5h6v1H0zM0 3h6L3 6.500z" fill="#e8ecf4" /></svg>
      </button>
    </div>
    <div className="h-[2px] bg-[#fff29d]" />
    <div className="relative flex-1 border-l border-[#7e8fae] bg-white">
      <SurfaceChart />
      <div className="absolute top-[3px] left-[3px] flex items-center gap-1 text-[9px] leading-3 whitespace-nowrap text-[#222]">
        <svg viewBox="0 0 13 13" className="size-[13px]">
          <path d="M1 1h8v7H1zM5 1v7M1 4.500h8" fill="#e9e9e9" stroke="#6a6a6a" strokeWidth=".9" />
          <path d="M9.500 1h2.500v4H9.500z" fill="#c63d32" />
          <path d="M9.500 5h2.500v3H9.500z" fill="#3aa044" />
          <path d="M1 11c4 1.500 8 1 11-.5" fill="none" stroke="#6bbab6" strokeWidth="1.200" />
        </svg>
        {VALUE}
      </div>
      <div
        role="tooltip"
        className="absolute top-[193px] left-[386px] w-[420px] rounded-[3px] border border-[#c8cad4] bg-[#e8e8ec] pt-[7px] pb-[2px] pl-[6px] text-[9px] leading-3 whitespace-nowrap text-[#222]"
      >
        <p>{VALUE}</p>
        <p>Unchanged</p>
        <div className="-ml-[4px] flex items-center gap-[6px] pt-[2px]">
          <MouseIcon />
          Drag with the right mouse button to modify selection
        </div>
      </div>
    </div>
  </main>
);

export default function App() {
  return (
    <div className="flex min-h-screen flex-col overflow-x-hidden bg-[#d6dbe9] font-[Roboto,'Open_Sans',sans-serif] text-[#1e1e1e]">
      <header className="flex h-6 items-center gap-[7px] pr-2 pl-[1px]">
        <AppIcon />
        <h1 className="flex-1 text-[12px] text-[#3c3c3c]">BitEdit - [Nissan Hitachi Petrol Gen1 SH7055] - 1VC21A</h1>
        <div className="flex items-center gap-[18px] text-[#1b1b1b]">
          <button aria-label="Minimize"><svg viewBox="0 0 9 9" className="block size-[9px]"><path d="M1 7h7" stroke="currentColor" strokeWidth="2" /></svg></button>
          <button aria-label="Restore"><svg viewBox="0 0 9 9" className="block size-[9px]"><path d="M1 3.500h5v4.500H1zM3 3V1h5v5H6" fill="none" stroke="currentColor" strokeWidth="1.200" /></svg></button>
          <button aria-label="Close"><svg viewBox="0 0 9 9" className="block size-[9px]"><path d="M1.500 1.500l6 6M7.500 1.500l-6 6" stroke="currentColor" strokeWidth="1.800" /></svg></button>
        </div>
      </header>
      <nav className="flex h-[19px] items-center gap-[11px] pl-[7px] text-[9px] text-[#3c3c3c]">
        {["File", "Edit", "View", "Window", "About", "Language"].map((item) => (
          <button key={item}>{item}</button>
        ))}
      </nav>
      <div className="flex h-[19px] border-b border-[#9aa5bd] pl-[1px] text-[9px]">
        <button className="-mb-px w-[41px] border border-b-0 border-[#6d82ad] bg-[#fcfcfc] font-semibold">Main</button>
        <button className="w-[35px] border border-b-0 border-[#6d82ad] bg-[#c3c9d9]">Edit</button>
      </div>
      <Ribbon />
      <div className="flex flex-1 items-stretch gap-[5px] bg-[#293955] pt-[3px] pr-[4px] pb-[3px] pl-[4px]">
        <MapsPanel />
        <Workspace />
      </div>
      <div className="h-[2px] bg-[#10142a]" />
    </div>
  );
}
